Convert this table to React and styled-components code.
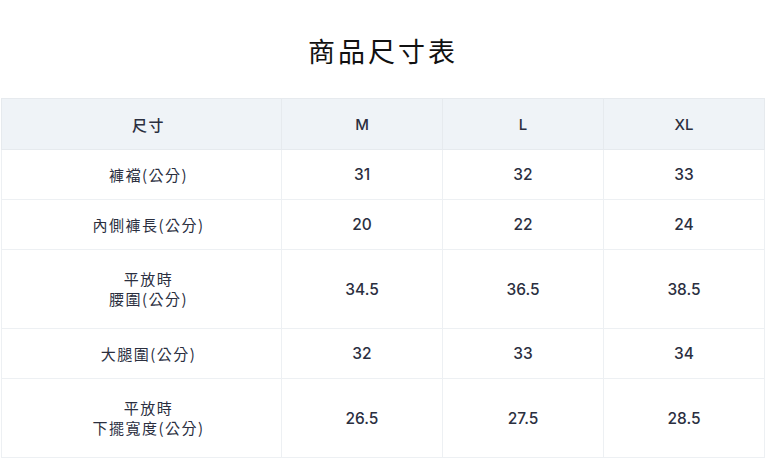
import React from "react";
import styled, { createGlobalStyle } from "styled-components";

const GlobalStyle = createGlobalStyle`
  body {
    margin: 0;
    background: #fff;
    font-family: Inter, "Noto Sans CJK TC", sans-serif;
  }
`;

const sizes = ["M", "L", "XL"];

const rows = [
  { label: ["褲襠(公分)"], values: ["31", "32", "33"], tall: false },
  { label: ["內側褲長(公分)"], values: ["20", "22", "24"], tall: false },
  { label: ["平放時", "腰圍(公分)"], values: ["34.5", "36.5", "38.5"], tall: true },
  { label: ["大腿圍(公分)"], values: ["32", "33", "34"], tall: false },
  { label: ["平放時", "下擺寬度(公分)"], values: ["26.5", "27.5", "28.5"], tall: true },
];

function App() {
  return (
    <Page>
      <GlobalStyle />
      <Title>商品尺寸表</Title>
      <Table>
        <colgroup>
          <col style={{ width: 280 }} />
          <col style={{ width: 161 }} />
          <col style={{ width: 161 }} />
          <col />
        </colgroup>
        <thead>
          <tr>
            <HeadCell $first>尺寸</HeadCell>
            {sizes.map((s) => (
              <HeadCell key={s}>{s}</HeadCell>
            ))}
          </tr>
        </thead>
        <tbody>
          {rows.map((row, i) => (
            <Row key={i} $tall={row.tall}>
              <LabelCell>
                {row.label.map((line, j) => (
                  <Line key={j}>{line}</Line>
                ))}
              </LabelCell>
              {row.values.map((v, j) => (
                <Cell key={j}>{v}</Cell>
              ))}
            </Row>
          ))}
        </tbody>
      </Table>
    </Page>
  );
}

const Page = styled.div`
  width: 766px;
  padding: 0 1px;
  box-sizing: border-box;
`;

const Title = styled.h1`
  margin: 0;
  padding-top: 35px;
  height: 98px;
  box-sizing: border-box;
  text-align: center;
  font-family: "Noto Sans CJK TC", sans-serif;
  font-weight: 400;
  font-size: 27px;
  line-height: 32px;
  letter-spacing: 3px;
  color: #111;
`;

const Table = styled.table`
  width: 764px;
  border-collapse: collapse;
  table-layout: fixed;
  color: #2b2f3f;
`;

const HeadCell = styled.th`
  height: 50px;
  padding: 0 0 0 ${(p) => (p.$first ? "14px" : "0")};
  background: #eff3f7;
  border: 1px solid #e6eaee;
  font-family: Inter, "Noto Sans CJK TC", sans-serif;
  font-weight: 500;
  font-size: 15px;
  letter-spacing: ${(p) => (p.$first ? "1.5px" : "0")};
  text-align: center;
  vertical-align: middle;
`;

const Row = styled.tr`
  height: ${(p) => (p.$tall ? "79px" : "50px")};
`;

const Cell = styled.td`
  padding: 0;
  border: 1px solid #edf0f3;
  font-size: 15.5px;
  font-weight: 500;
  text-align: center;
  vertical-align: middle;
`;

const LabelCell = styled(Cell)`
  padding-left: 14px;
  font-family: "Noto Sans CJK TC", sans-serif;
  font-weight: 400;
  font-size: 15px;
  letter-spacing: 1.5px;
  line-height: 20px;
`;

const Line = styled.div``;

export default App;
